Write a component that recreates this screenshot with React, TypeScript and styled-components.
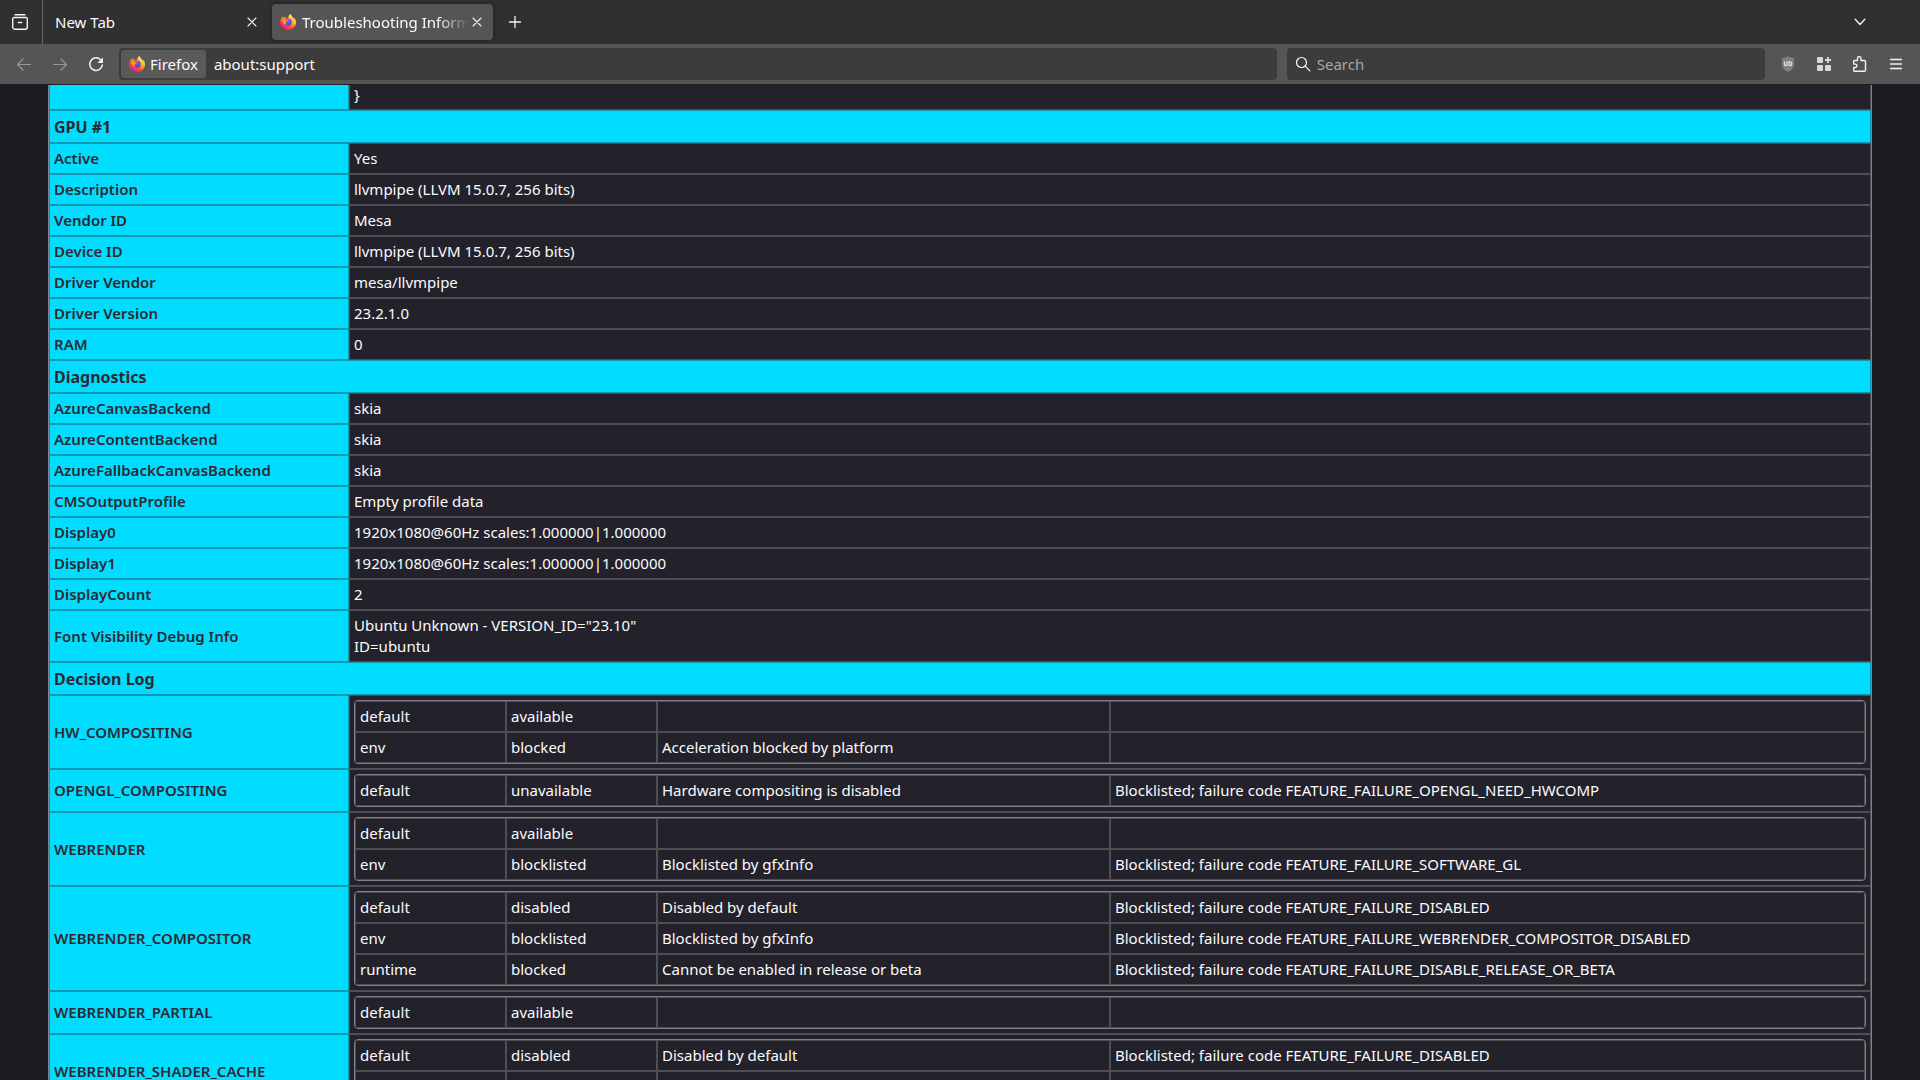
import React from "react";
import styled, { createGlobalStyle } from "styled-components";

const GlobalStyle = createGlobalStyle`
  * { box-sizing: border-box; }
  body {
    margin: 0;
    background: #1c1b22;
    color: #fbfbfe;
    font: 15px/21px "Noto Sans", sans-serif;
  }
  button, input { font: inherit; color: inherit; }
`;

const Window = styled.div`
  display: flex;
  flex-direction: column;
  height: 100vh;
  overflow: hidden;
`;

const TabBar = styled.header`
  display: flex;
  align-items: center;
  flex: none;
  height: 44px;
  background: #303030;
`;

const IconButton = styled.button<{ $width?: number; $dim?: boolean }>`
  display: flex;
  align-items: center;
  justify-content: center;
  flex: none;
  width: ${(p) => p.$width ?? 36}px;
  height: 32px;
  padding: 0;
  border: 0;
  background: none;
  color: ${(p) => (p.$dim ? "#979797" : "#f2f2f2")};
`;

const ViewSlot = styled.div`
  display: flex;
  align-items: center;
  height: 44px;
  padding: 0 3px 0 1px;
  border-right: 1px solid #696969;
`;

const Tabs = styled.div`
  display: flex;
  gap: 4px;
`;

const Tab = styled.div<{ $active?: boolean; $width: number }>`
  display: flex;
  align-items: center;
  width: ${(p) => p.$width}px;
  height: 36px;
  padding: 0 8px 0 ${(p) => (p.$active ? 8 : 12)}px;
  border-radius: 4px;
  background: ${(p) => (p.$active ? "#555555" : "transparent")};
  box-shadow: ${(p) => (p.$active ? "0 0 4px rgba(0, 0, 0, 0.4)" : "none")};
`;

const TabTitle = styled.span<{ $fade?: boolean }>`
  flex: 1;
  padding-left: ${(p) => (p.$fade ? 6 : 0)}px;
  overflow: hidden;
  white-space: nowrap;
  mask-image: ${(p) => (p.$fade ? "linear-gradient(to left, transparent, black 32px)" : "none")};
`;

const Spacer = styled.div`
  flex: 1;
`;

const Toolbar = styled.nav`
  display: flex;
  align-items: center;
  flex: none;
  height: 41px;
  padding: 0 6px;
  background: #555555;
  border-bottom: 1px solid #202020;
`;

const Fields = styled.div`
  display: flex;
  flex: 1;
  gap: 10px;
  padding: 0 5px;
`;

const Field = styled.div<{ $grow: number }>`
  display: flex;
  align-items: center;
  flex: ${(p) => p.$grow} 1 0;
  height: 32px;
  border-radius: 4px;
  background: #3c3c3c;
`;

const Identity = styled.button`
  display: flex;
  align-items: center;
  gap: 5px;
  height: 28px;
  margin: 0 8px 0 2px;
  padding: 0 8px;
  border: 0;
  border-radius: 3px;
  background: #5a5a5a;
`;

const TextBox = styled.input`
  flex: 1;
  min-width: 0;
  height: 28px;
  padding: 0;
  border: 0;
  outline: 0;
  background: none;
  &::placeholder { color: #a8a8a8; opacity: 1; }
`;

const SearchLabel = styled.label`
  display: flex;
  padding: 0 6px 0 8px;
`;

const Page = styled.main`
  flex: 1;
  min-height: 0;
  overflow: hidden;
  padding: 0 48px;
`;

const InfoTable = styled.table`
  width: 100%;
  table-layout: fixed;
  border-collapse: separate;
  border-spacing: 0;
  border: 1px solid #80808e;
  border-width: 0 1px;
`;

const LabelColumn = styled.col`
  width: 300px;
`;

const Cell = styled.td<{ $cut?: boolean }>`
  padding: ${(p) => (p.$cut ? "0 4px 6px" : "4px")};
  border: 1px solid #4f4e54;
  border-top-width: ${(p) => (p.$cut ? 0 : 1)}px;
  background: #23222b;
  line-height: ${(p) => (p.$cut ? 18 : 21)}px;
  white-space: pre-line;
`;

const Label = styled.th<{ $cut?: boolean }>`
  padding: 4px;
  border: 1px solid #1596b0;
  border-top-width: ${(p) => (p.$cut ? 0 : 1)}px;
  background: #00ddff;
  color: #2b2a33;
  font-weight: 600;
  text-align: left;
`;

const SectionLabel = styled(Label)`
  padding: 5px 4px 3px;
  font-size: 16px;
  font-weight: 700;
  line-height: 23px;
`;

const LogTable = styled.table`
  width: 100%;
  table-layout: fixed;
  border-collapse: separate;
  border-spacing: 0;
  border: 1px solid #80808e;
  border-radius: 4px;
  overflow: hidden;
`;

const LogColumn = styled.col<{ $share: number }>`
  width: ${(p) => p.$share}%;
`;

const LogCell = styled.td`
  height: 31px;
  padding: 4px;
  border: 1px solid #4f4e54;
`;

const Svg = ({ children }: { children: React.ReactNode }) => (
  <svg width={16} height={16} viewBox="0 0 16 16" fill="none" stroke="currentColor" strokeWidth="1.2" strokeLinecap="round" strokeLinejoin="round" aria-hidden="true">
    {children}
  </svg>
);

const ViewIcon = () => (
  <Svg>
    <path d="M3 .7h10M2 3.500h12a1.300 1.300 0 0 1 1.300 1.300v8.400a2 2 0 0 1-2 2H2.700a2 2 0 0 1-2-2V4.800A1.300 1.300 0 0 1 2 3.500ZM6.300 8.500h3.400" strokeWidth="1.400" />
  </Svg>
);
const CloseIcon = () => (
  <Svg><path d="M4 4l8 8M12 4l-8 8" strokeWidth="1.100" /></Svg>
);
const PlusIcon = () => (
  <Svg><path d="M8 2.500v11M2.500 8h11" strokeWidth="1.300" /></Svg>
);
const ChevronIcon = () => (
  <Svg><path d="M3.200 5.200 8 10.500l4.800-5.300" strokeWidth="1.400" /></Svg>
);
const BackIcon = () => (
  <Svg><path d="M14.500 8.500H1.500M7 3 1.500 8.500 7 14" /></Svg>
);
const ForwardIcon = () => (
  <Svg><path d="M1.500 8.500h13M9 3l5.500 5.500L9 14" /></Svg>
);
const ReloadIcon = () => (
  <Svg>
    <path d="M12.800 4A6.300 6.300 0 1 0 14.300 9" strokeWidth="1.500" />
    <path d="M15 1.400v5a.6.600 0 0 1-.6.600H9.400Z" fill="currentColor" stroke="none" />
  </Svg>
);
const SearchIcon = () => (
  <Svg><circle cx="6.500" cy="6.500" r="5" /><path d="M10.200 10.200 14.800 14.800" /></Svg>
);
const ShieldIcon = () => (
  <Svg>
    <path d="M8 0c2 1.400 4 1.900 6 1.900V8c0 4-2.500 6.300-6 8-3.500-1.700-6-4-6-8V1.900C4 1.900 6 1.400 8 0Z" fill="#808080" stroke="none" />
    <path d="M4.500 5.800v2.500a1.300 1.300 0 0 0 2.600 0V5.800M9 5.800v3.800h.8a1.900 1.900 0 0 0 0-3.800Z" stroke="#e6e6e6" />
  </Svg>
);
const AddonsIcon = () => (
  <Svg>
    <g fill="#d9d9d9" stroke="none">
      <rect x="1" y="1" width="6" height="6" rx="1" />
      <rect x="1" y="9" width="6" height="6" rx="1" />
      <rect x="9" y="9" width="6" height="6" rx="1" />
      <path d="M11 1h1.800v2.100H15v1.800h-2.200V7H11V4.900H9V3.100h2Z" />
    </g>
  </Svg>
);
const PuzzleIcon = () => (
  <Svg>
    <path d="M5.500 4.500V2.300a1.700 1.700 0 0 1 3.400 0v2.200h3.600a1 1 0 0 1 1 1v8.700a1 1 0 0 1-1 1H2.700a1 1 0 0 1-1-1v-2.700h1.500a1.700 1.700 0 0 0 0-3.400H1.700V5.500a1 1 0 0 1 1-1Z" strokeWidth="1.400" />
  </Svg>
);
const MenuIcon = () => (
  <Svg><path d="M2.500 3.500h11M2.500 8h11M2.500 12.500h11" strokeWidth="1.300" /></Svg>
);

const FirefoxIcon = () => (
  <svg width="16" height="16" viewBox="0 0 16 16" aria-hidden="true">
    <defs>
      <linearGradient id="flame" x1="0.850" y1="0.100" x2="0.200" y2="0.950">
        <stop offset="0" stopColor="#fff44f" />
        <stop offset="0.350" stopColor="#ffb02e" />
        <stop offset="0.650" stopColor="#ff4a3d" />
        <stop offset="1" stopColor="#e31587" />
      </linearGradient>
      <radialGradient id="globe" cx="0.500" cy="0.300" r="0.700">
        <stop offset="0" stopColor="#9059ff" />
        <stop offset="1" stopColor="#5b3bc8" />
      </radialGradient>
    </defs>
    <path d="M15.400 5.600C15 4.700 14.200 3.700 13.500 3.400c.5 1 .8 1.900.9 2.500C13.400 3.400 11.600 2.400 10.500 0 8.800 1 8.300 2.700 8.200 3.900c-1 .1-1.700.4-2.400.8-.5-.5-.6-1.500-.3-2.300C4.600 2.800 3.900 3.500 3.400 4.100 3 3.600 3.100 2.200 3.100 1.900 2.500 2.300 0 5 0 8.400A7.900 7.900 0 0 0 8 16c4.200 0 8-3.300 8-7.600 0-1-.2-2-.6-2.800Z" fill="url(#flame)" />
    <circle cx="8.200" cy="8" r="3.500" fill="url(#globe)" />
    <path d="M1.800 6.200c1-.9 2.600-.8 3.600-.1h2.400c.2.800-1.600 1.500-1.900 1.800-.2.600.1 1.500.7 2-1 1-2.300.6-3-.5-.7-1-1-2.200-1.800-3.200Z" fill="#ff9a22" />
  </svg>
);

type Section = { title: string; rows: [string, string][] };

const sections: Section[] = [
  {
    title: "GPU #1",
    rows: [
      ["Active", "Yes"],
      ["Description", "llvmpipe (LLVM 15.0.7, 256 bits)"],
      ["Vendor ID", "Mesa"],
      ["Device ID", "llvmpipe (LLVM 15.0.7, 256 bits)"],
      ["Driver Vendor", "mesa/llvmpipe"],
      ["Driver Version", "23.2.1.0"],
      ["RAM", "0"],
    ],
  },
  {
    title: "Diagnostics",
    rows: [
      ["AzureCanvasBackend", "skia"],
      ["AzureContentBackend", "skia"],
      ["AzureFallbackCanvasBackend", "skia"],
      ["CMSOutputProfile", "Empty profile data"],
      ["Display0", "1920x1080@60Hz scales:1.000000|1.000000"],
      ["Display1", "1920x1080@60Hz scales:1.000000|1.000000"],
      ["DisplayCount", "2"],
      ["Font Visibility Debug Info", 'Ubuntu Unknown - VERSION_ID="23.10"\nID=ubuntu'],
    ],
  },
];

const decisions: [string, string[][]][] = [
  ["HW_COMPOSITING", [
    ["default", "available", "", ""],
    ["env", "blocked", "Acceleration blocked by platform", ""],
  ]],
  ["OPENGL_COMPOSITING", [
    ["default", "unavailable", "Hardware compositing is disabled", "Blocklisted; failure code FEATURE_FAILURE_OPENGL_NEED_HWCOMP"],
  ]],
  ["WEBRENDER", [
    ["default", "available", "", ""],
    ["env", "blocklisted", "Blocklisted by gfxInfo", "Blocklisted; failure code FEATURE_FAILURE_SOFTWARE_GL"],
  ]],
  ["WEBRENDER_COMPOSITOR", [
    ["default", "disabled", "Disabled by default", "Blocklisted; failure code FEATURE_FAILURE_DISABLED"],
    ["env", "blocklisted", "Blocklisted by gfxInfo", "Blocklisted; failure code FEATURE_FAILURE_WEBRENDER_COMPOSITOR_DISABLED"],
    ["runtime", "blocked", "Cannot be enabled in release or beta", "Blocklisted; failure code FEATURE_FAILURE_DISABLE_RELEASE_OR_BETA"],
  ]],
  ["WEBRENDER_PARTIAL", [["default", "available", "", ""]]],
  ["WEBRENDER_SHADER_CACHE", [
    ["default", "disabled", "Disabled by default", "Blocklisted; failure code FEATURE_FAILURE_DISABLED"],
    ["", "", "", ""],
  ]],
];

const columnShares = [10, 10, 30, 50];

const DecisionLog = ({ entries }: { entries: string[][] }) => (
  <LogTable>
    <colgroup>
      {columnShares.map((share, i) => <LogColumn key={i} $share={share} />)}
    </colgroup>
    <tbody>
      {entries.map((entry, i) => (
        <tr key={i}>{entry.map((text, j) => <LogCell key={j}>{text}</LogCell>)}</tr>
      ))}
    </tbody>
  </LogTable>
);

export default function App() {
  return (
    <Window>
      <GlobalStyle />
      <TabBar>
        <ViewSlot>
          <IconButton $width={38} aria-label="Firefox View"><ViewIcon /></IconButton>
        </ViewSlot>
        <Tabs>
          <Tab $width={225}>
            <TabTitle>New Tab</TabTitle>
            <IconButton $width={16} aria-label="Close tab"><CloseIcon /></IconButton>
          </Tab>
          <Tab $active $width={221}>
            <FirefoxIcon />
            <TabTitle $fade>Troubleshooting Information</TabTitle>
            <IconButton $width={16} aria-label="Close tab"><CloseIcon /></IconButton>
          </Tab>
        </Tabs>
        <IconButton $width={44} aria-label="New tab"><PlusIcon /></IconButton>
        <Spacer />
        <IconButton $width={120} aria-label="List all tabs"><ChevronIcon /></IconButton>
      </TabBar>
      <Toolbar>
        <IconButton $dim aria-label="Back"><BackIcon /></IconButton>
        <IconButton $dim aria-label="Forward"><ForwardIcon /></IconButton>
        <IconButton aria-label="Reload"><ReloadIcon /></IconButton>
        <Fields>
          <Field $grow={1157}>
            <Identity><FirefoxIcon />Firefox</Identity>
            <TextBox aria-label="Address" defaultValue="about:support" />
          </Field>
          <Field $grow={478}>
            <SearchLabel htmlFor="search"><SearchIcon /></SearchLabel>
            <TextBox id="search" aria-label="Search" placeholder="Search" />
          </Field>
        </Fields>
        <IconButton aria-label="uBlock"><ShieldIcon /></IconButton>
        <IconButton aria-label="Add-ons"><AddonsIcon /></IconButton>
        <IconButton aria-label="Extensions"><PuzzleIcon /></IconButton>
        <IconButton aria-label="Menu"><MenuIcon /></IconButton>
      </Toolbar>
      <Page>
        <InfoTable>
          <colgroup>
            <LabelColumn />
            <col />
          </colgroup>
          <tbody>
            <tr>
              <Label $cut scope="row" />
              <Cell $cut>{"}"}</Cell>
            </tr>
            {sections.map((section) => (
              <React.Fragment key={section.title}>
                <tr><SectionLabel colSpan={2}>{section.title}</SectionLabel></tr>
                {section.rows.map(([name, value]) => (
                  <tr key={name}>
                    <Label scope="row">{name}</Label>
                    <Cell>{value}</Cell>
                  </tr>
                ))}
              </React.Fragment>
            ))}
            <tr><SectionLabel colSpan={2}>Decision Log</SectionLabel></tr>
            {decisions.map(([name, entries]) => (
              <tr key={name}>
                <Label scope="row">{name}</Label>
                <Cell><DecisionLog entries={entries} /></Cell>
              </tr>
            ))}
          </tbody>
        </InfoTable>
      </Page>
    </Window>
  );
}
